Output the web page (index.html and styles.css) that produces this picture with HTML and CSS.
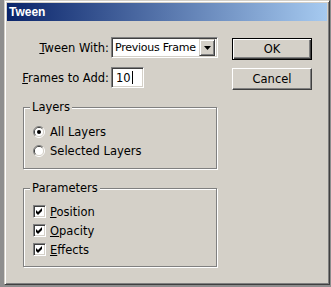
FILE: index.html
```html
<!DOCTYPE html>
<html lang="en">
<head>
    <meta charset="UTF-8">
    <title>Tween</title>
    <link rel="stylesheet" href="styles.css">
</head>
<body>
    <div class="window">
        <div class="titlebar"><span>Tween</span></div>
        <div class="content">
            <div class="top">
                <div class="fields">
                    <div class="row">
                        <label class="lbl"><u>T</u>ween With:</label>
                        <div class="sunken select">
                            <span class="sel-text">Previous Frame</span>
                            <span class="drop">
                                <svg width="7" height="4" viewBox="0 0 7 4"><path d="M0 0H7L3.5 4Z" fill="#000"/></svg>
                            </span>
                        </div>
                    </div>
                    <div class="row">
                        <label class="lbl"><u>F</u>rames to Add:</label>
                        <div class="sunken input">10<span class="caret"></span></div>
                    </div>
                </div>
                <div class="buttons">
                    <button class="btn default">OK</button>
                    <button class="btn">Cancel</button>
                </div>
            </div>

            <fieldset class="group layers">
                <legend>Layers</legend>
                <div class="opts">
                    <div class="opt">
                        <svg class="radio" width="12" height="12" viewBox="0 0 12 12">
                            <path d="M9.9 2.1A5.5 5.5 0 0 0 2.1 9.9" fill="none" stroke="#808080"/>
                            <path d="M2.1 9.9A5.5 5.5 0 0 0 9.9 2.1" fill="none" stroke="#fff"/>
                            <path d="M9.2 2.8A4.5 4.5 0 0 0 2.8 9.2" fill="none" stroke="#404040"/>
                            <path d="M2.8 9.2A4.5 4.5 0 0 0 9.2 2.8" fill="none" stroke="#d4d0c8"/>
                            <circle cx="6" cy="6" r="4" fill="#fff"/>
                            <circle cx="6" cy="6" r="2" fill="#000"/>
                        </svg>
                        <span>All Layers</span>
                    </div>
                    <div class="opt">
                        <svg class="radio" width="12" height="12" viewBox="0 0 12 12">
                            <path d="M9.9 2.1A5.5 5.5 0 0 0 2.1 9.9" fill="none" stroke="#808080"/>
                            <path d="M2.1 9.9A5.5 5.5 0 0 0 9.9 2.1" fill="none" stroke="#fff"/>
                            <path d="M9.2 2.8A4.5 4.5 0 0 0 2.8 9.2" fill="none" stroke="#404040"/>
                            <path d="M2.8 9.2A4.5 4.5 0 0 0 9.2 2.8" fill="none" stroke="#d4d0c8"/>
                            <circle cx="6" cy="6" r="4" fill="#fff"/>
                        </svg>
                        <span>Selected Layers</span>
                    </div>
                </div>
            </fieldset>

            <fieldset class="group params">
                <legend>Parameters</legend>
                <div class="opts">
                    <div class="opt check-opt">
                        <span class="check"><svg width="9" height="9" viewBox="0 0 9 9"><path d="M1 3L3 5L7 1V4L3 8L1 6Z" fill="#000"/></svg></span>
                        <span><u>P</u>osition</span>
                    </div>
                    <div class="opt check-opt">
                        <span class="check"><svg width="9" height="9" viewBox="0 0 9 9"><path d="M1 3L3 5L7 1V4L3 8L1 6Z" fill="#000"/></svg></span>
                        <span><u>O</u>pacity</span>
                    </div>
                    <div class="opt check-opt">
                        <span class="check"><svg width="9" height="9" viewBox="0 0 9 9"><path d="M1 3L3 5L7 1V4L3 8L1 6Z" fill="#000"/></svg></span>
                        <span><u>E</u>ffects</span>
                    </div>
                </div>
            </fieldset>
        </div>
    </div>
</body>
</html>
```

FILE: styles.css
```css
body {
    margin: 0;
    height: 287px;
    overflow: hidden;
    background: #8e8e8e;
    font-family: "DejaVu Sans", sans-serif;
    font-size: 11.5px;
    color: #000;
}

.window {
    margin-left: 4px;
    width: 326px;
    height: 285px;
    box-sizing: border-box;
    padding: 2px;
    background: #d4d0c8;
    border: 1px solid;
    border-color: #d4d0c8 #404040 #404040 #d4d0c8;
    box-shadow: inset 1px 1px #fff, inset -1px -1px #808080;
}

.titlebar {
    height: 18px;
    padding-left: 2px;
    display: flex;
    align-items: center;
    background: linear-gradient(to right, #0a246a, #a6caf0);
    color: #fff;
    font-family: "Liberation Sans", sans-serif;
    font-weight: bold;
    font-size: 12px;
}

.content {
    padding: 16px 0 0 14px;
}

.top {
    display: flex;
}

.fields {
    display: flex;
    flex-direction: column;
    gap: 9px;
}

.row {
    display: flex;
    align-items: center;
    height: 21px;
}

.lbl {
    width: 88px;
    margin-right: 2px;
    text-align: right;
    white-space: nowrap;
}

.sunken {
    box-sizing: border-box;
    height: 21px;
    background: #fff;
    border: 1px solid;
    border-color: #808080 #fff #fff #808080;
    box-shadow: inset 1px 1px #404040, inset -1px -1px #d4d0c8;
    display: flex;
    align-items: center;
}

.select {
    width: 107px;
    padding: 2px 2px 2px 3px;
}

.sel-text {
    flex: 1;
    min-width: 0;
    overflow: hidden;
    white-space: nowrap;
    font-size: 11px;
    letter-spacing: -0.25px;
}

.drop {
    flex: none;
    width: 16px;
    height: 17px;
    box-sizing: border-box;
    display: flex;
    align-items: center;
    justify-content: center;
    background: #d4d0c8;
    border: 1px solid;
    border-color: #d4d0c8 #404040 #404040 #d4d0c8;
    box-shadow: inset 1px 1px #fff, inset -1px -1px #808080;
}

.input {
    width: 33px;
    padding-left: 4px;
}

.caret {
    width: 1px;
    height: 13px;
    margin-left: 1px;
    background: #000;
}

.buttons {
    display: flex;
    flex-direction: column;
    gap: 8px;
    margin-left: 14px;
    padding-top: 1px;
}

.btn {
    width: 80px;
    height: 22px;
    padding: 0;
    font: inherit;
    color: #000;
    background: #d4d0c8;
    border: 1px solid;
    border-color: #fff #404040 #404040 #fff;
    box-shadow: inset -1px -1px #808080;
}

.btn.default {
    border-color: #000;
    box-shadow: inset 1px 1px #fff, inset -1px -1px #404040, inset -2px -2px #808080;
}

.group {
    width: 194px;
    box-sizing: border-box;
    margin: 10px 0 0 2px;
    padding: 0;
    min-width: 0;
    border: 1px solid #808080;
    box-shadow: 1px 1px 0 #fff, inset 1px 1px 0 #fff;
}

.params {
    margin-top: 12px;
}

.group legend {
    margin-left: 6px;
    padding: 0 2px;
    line-height: 14px;
    background: #d4d0c8;
}

.opts {
    padding: 8px 0 8px 9px;
}

.params .opts {
    padding: 7px 0 7px 9px;
}

.opt {
    display: flex;
    align-items: center;
    height: 19px;
}

.radio {
    margin-right: 5px;
}

.check {
    width: 13px;
    height: 13px;
    box-sizing: border-box;
    margin-right: 4px;
    display: flex;
    align-items: center;
    justify-content: center;
    background: #fff;
    border: 1px solid;
    border-color: #808080 #fff #fff #808080;
    box-shadow: inset 1px 1px #404040, inset -1px -1px #d4d0c8;
}
```
